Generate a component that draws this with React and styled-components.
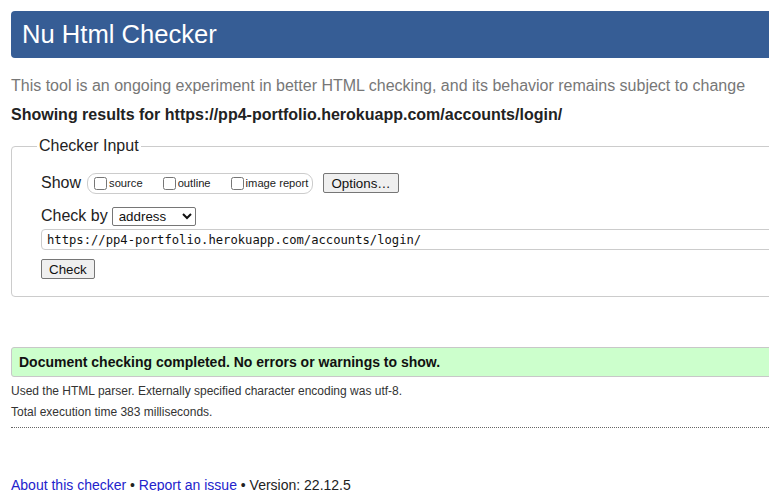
import React from 'react';
import styled, { createGlobalStyle } from 'styled-components';

const GlobalStyle = createGlobalStyle`
  html, body {
    margin: 0;
    padding: 0;
    overflow: hidden;
    background: #fff;
  }
  body {
    font-family: "Liberation Sans", Arial, sans-serif;
    color: #222;
  }
`;

const Page = styled.div`
  width: 1200px;
  padding: 11px 0 0 11px;
`;

const Header = styled.h1`
  margin: 0;
  height: 47px;
  padding-left: 11px;
  background: #365d95;
  border-radius: 4px;
  color: #fff;
  font-size: 25.6px;
  font-weight: normal;
  line-height: 47px;
`;

const Tagline = styled.p`
  margin: 18px 0 0;
  font-size: 16px;
  line-height: 20px;
  color: #777;
`;

const Results = styled.p`
  margin: 9px 0 0;
  font-size: 16px;
  font-weight: bold;
  line-height: 20px;
  color: #222;
`;

const Form = styled.fieldset`
  margin: 11px 0 0;
  padding: 17px 0 17px 29px;
  min-width: 0;
  border: 1px solid #ccc;
  border-radius: 4px;
`;

const Legend = styled.legend`
  margin-left: -4px;
  padding: 0 2px;
  font-size: 16px;
  line-height: 20px;
  color: #222;
`;

const Row = styled.div`
  display: flex;
  align-items: center;
  height: 20px;
  margin-top: ${({ $top }) => $top || 0}px;
  font-size: 16px;
  line-height: 20px;
`;

const Options = styled.span`
  display: inline-flex;
  align-items: center;
  height: 19px;
  margin-left: 6px;
  padding: 0 4px 0 6px;
  border: 1px solid #ccc;
  border-radius: 9px;
`;

const Option = styled.label`
  display: inline-flex;
  align-items: center;
  margin-right: ${({ $last }) => ($last ? 0 : 20)}px;
  font-size: 11.2px;
  line-height: 14px;
  color: #222;

  input {
    width: 13px;
    height: 13px;
    margin: 0 2px 0 0;
  }
`;

const Button = styled.button`
  height: 20px;
  margin-left: ${({ $left }) => $left || 0}px;
  padding: 0 7px;
  font-family: "Liberation Sans", Arial, sans-serif;
  font-size: 13.33px;
  color: #111;
  background: #efefef;
  border: 1px solid #767676;
  border-radius: 2px;
`;

const Select = styled.select`
  width: 84px;
  height: 19px;
  margin-left: 4px;
  padding: 0 0 0 2px;
  font-family: "Liberation Sans", Arial, sans-serif;
  font-size: 13.33px;
  color: #111;
  background: #fff;
  border: 1px solid #767676;
  border-radius: 2px;
`;

const UrlInput = styled.input`
  display: block;
  box-sizing: border-box;
  width: 100%;
  height: 21px;
  margin-top: 3px;
  padding: 0 5px;
  font-family: "DejaVu Sans Mono", "Liberation Mono", monospace;
  font-size: 12.2px;
  color: #111;
  border: 1px solid #ccc;
  border-radius: 4px;
`;

const ButtonRow = styled.div`
  margin-top: 9px;
  height: 20px;
`;

const Success = styled.p`
  margin: 50px 0 0;
  padding: 0 7px;
  font-size: 14px;
  font-weight: bold;
  line-height: 28px;
  color: #111;
  background: #ccffcc;
  border: 1px solid #c8c8c8;
  border-radius: 3px;
`;

const Details = styled.div`
  margin-top: 4px;
  padding-bottom: 4px;
  border-bottom: 1px dotted #666;
`;

const Detail = styled.p`
  margin: 0;
  font-size: 12px;
  line-height: 21px;
  color: #333;
`;

const Footer = styled.p`
  margin: 47px 0 0;
  font-size: 14px;
  line-height: 20px;
  color: #222;

  a {
    color: #2323cc;
    text-decoration: none;
  }
`;

export default function App() {
  return (
    <Page>
      <GlobalStyle />
      <Header>Nu Html Checker</Header>
      <Tagline>
        This tool is an ongoing experiment in better HTML checking, and its behavior remains subject to change
      </Tagline>
      <Results>Showing results for https://pp4-portfolio.herokuapp.com/accounts/login/</Results>
      <Form>
        <Legend>Checker Input</Legend>
        <Row>
          Show
          <Options>
            <Option>
              <input type="checkbox" />
              source
            </Option>
            <Option>
              <input type="checkbox" />
              outline
            </Option>
            <Option $last>
              <input type="checkbox" />
              image report
            </Option>
          </Options>
          <Button $left={10}>Options…</Button>
        </Row>
        <Row $top={13}>
          Check by
          <Select defaultValue="address">
            <option value="address">address</option>
            <option value="file">file upload</option>
            <option value="text">text input</option>
          </Select>
        </Row>
        <UrlInput defaultValue="https://pp4-portfolio.herokuapp.com/accounts/login/" />
        <ButtonRow>
          <Button>Check</Button>
        </ButtonRow>
      </Form>
      <Success>Document checking completed. No errors or warnings to show.</Success>
      <Details>
        <Detail>Used the HTML parser. Externally specified character encoding was utf-8.</Detail>
        <Detail>Total execution time 383 milliseconds.</Detail>
      </Details>
      <Footer>
        <a href="#about">About this checker</a> • <a href="#issue">Report an issue</a> • Version: 22.12.5
      </Footer>
    </Page>
  );
}
